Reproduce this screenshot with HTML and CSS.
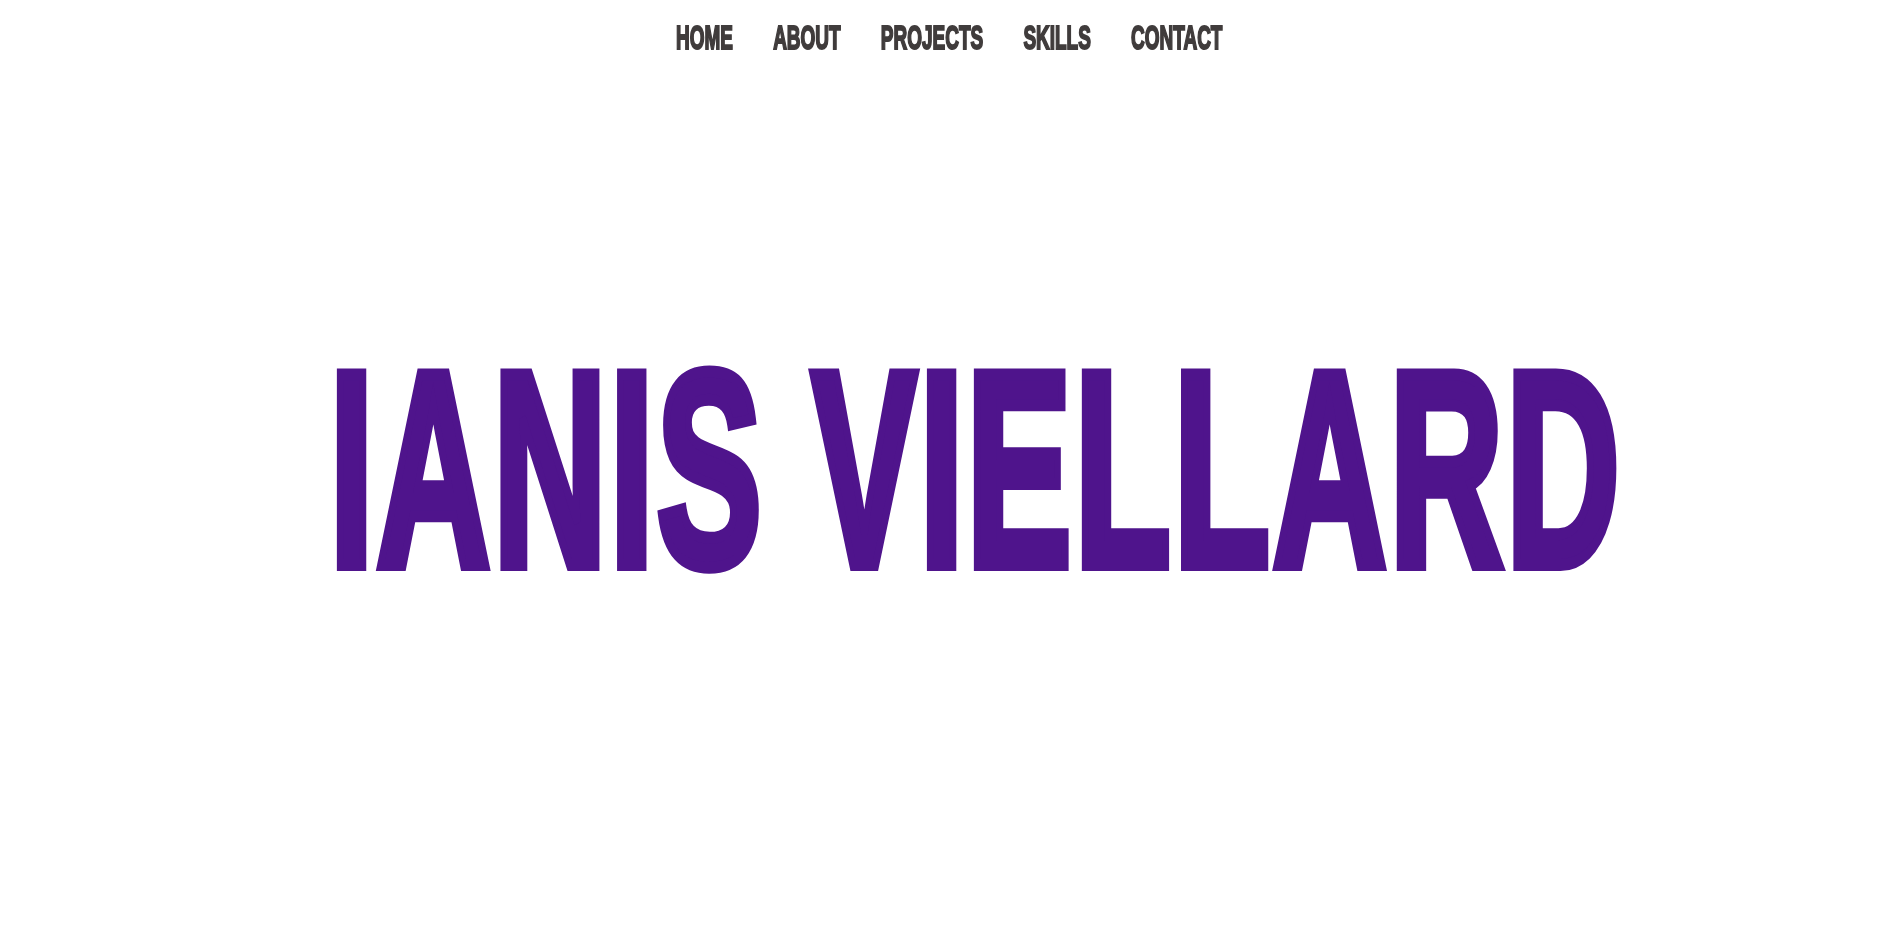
FILE: index.html
```html
<!DOCTYPE html>
<html lang="en">
<head>
<meta charset="utf-8">
<title>Ianis Viellard</title>
<link rel="stylesheet" href="styles.css">
</head>
<body>
<nav class="topnav">
  <ul class="menu">
    <li><a href="#home">HOME</a></li>
    <li><a href="#about">ABOUT</a></li>
    <li><a href="#projects">PROJECTS</a></li>
    <li><a href="#skills">SKILLS</a></li>
    <li><a href="#contact">CONTACT</a></li>
  </ul>
</nav>
<main class="hero" id="home">
  <h1 class="title">IANIS VIELLARD</h1>
</main>
</body>
</html>
```
FILE: styles.css
```css
html, body {
  margin: 0;
  padding: 0;
  background: #ffffff;
}
body {
  font-family: "Liberation Sans", Arial, sans-serif;
}
.topnav {
  position: fixed;
  top: 0;
  left: 0;
  right: 0;
  display: flex;
  justify-content: center;
  padding: 21px 0 0 4px;
}
.menu {
  list-style: none;
  margin: 0;
  padding: 0;
  display: flex;
  gap: 70px;
  transform: scaleX(0.575);
  transform-origin: center;
}
.menu a {
  display: block;
  color: #403c3c;
  text-decoration: none;
  font-weight: bold;
  font-size: 33px;
  line-height: 1;
  -webkit-text-stroke: 2px #403c3c;
}
.hero {
  height: 100vh;
  display: flex;
  align-items: center;
  justify-content: center;
  box-sizing: border-box;
  padding: 4px 0 0 59px;
}
.title {
  margin: 0;
  font-size: 277px;
  line-height: 1;
  font-weight: bold;
  letter-spacing: 6px;
  color: #4f148c;
  -webkit-text-stroke: 12px #4f148c;
  white-space: nowrap;
  transform: scaleX(0.566);
  transform-origin: center;
}
```
